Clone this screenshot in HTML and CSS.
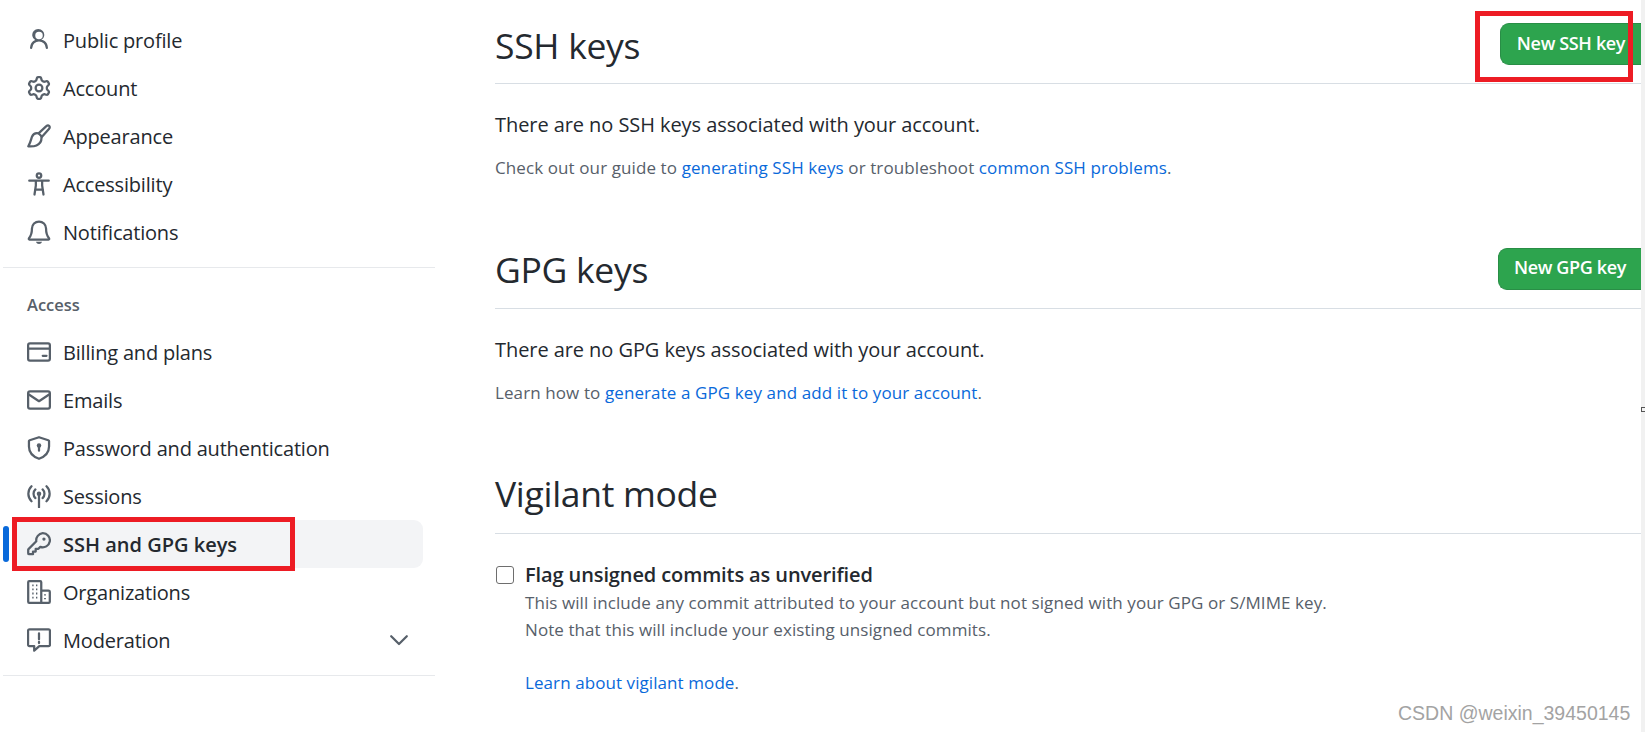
FILE: index.html
```html
<!DOCTYPE html>
<html lang="en">
<head>
<meta charset="utf-8">
<title>SSH and GPG keys</title>
<link rel="stylesheet" href="styles.css">
</head>
<body>
<div class="page">
  <aside class="sidebar">
    <nav class="group first">
      <a class="item"><svg class="ico" viewBox="0 0 16 16"><path class="f" d="M10.561 8.073a6.005 6.005 0 0 1 3.432 5.142.75.75 0 1 1-1.498.07 4.5 4.5 0 0 0-8.99 0 .75.75 0 1 1-1.498-.07 6.004 6.004 0 0 1 3.431-5.142 3.999 3.999 0 1 1 4.123 0ZM10.5 5a2.5 2.5 0 1 0-5 0 2.5 2.5 0 0 0 5 0Z"/></svg><span>Public profile</span></a>
      <a class="item"><svg class="ico" viewBox="0 0 16 16"><path class="f" d="M8 0a8.2 8.2 0 0 1 .701.031C9.444.095 9.99.645 10.16 1.29l.288 1.107c.018.066.079.158.212.224.231.114.454.243.668.386.123.082.233.09.299.071l1.103-.303c.644-.176 1.392.021 1.82.63.27.385.506.792.704 1.218.315.675.111 1.422-.364 1.891l-.814.806c-.049.048-.098.147-.088.294.016.257.016.515 0 .772-.01.147.038.246.088.294l.814.806c.475.469.679 1.216.364 1.891a7.977 7.977 0 0 1-.704 1.217c-.428.61-1.176.807-1.82.63l-1.102-.302c-.067-.019-.177-.011-.3.071a5.909 5.909 0 0 1-.668.386c-.133.066-.194.158-.211.224l-.29 1.106c-.168.646-.715 1.196-1.458 1.26a8.006 8.006 0 0 1-1.402 0c-.743-.064-1.289-.614-1.458-1.26l-.289-1.106c-.018-.066-.079-.158-.212-.224a5.738 5.738 0 0 1-.668-.386c-.123-.082-.233-.09-.299-.071l-1.103.303c-.644.176-1.392-.021-1.82-.63a8.12 8.12 0 0 1-.704-1.218c-.315-.675-.111-1.422.363-1.891l.815-.806c.05-.048.098-.147.088-.294a6.214 6.214 0 0 1 0-.772c.01-.147-.038-.246-.088-.294l-.815-.806C.635 6.045.431 5.298.746 4.623a7.92 7.92 0 0 1 .704-1.217c.428-.61 1.176-.807 1.82-.63l1.102.302c.067.019.177.011.3-.071.214-.143.437-.272.668-.386.133-.066.194-.158.211-.224l.29-1.106C6.009.645 6.556.095 7.299.03 7.53.01 7.764 0 8 0Zm-.571 1.525c-.036.003-.108.036-.137.146l-.289 1.105c-.147.561-.549.967-.998 1.189-.173.086-.34.183-.5.29-.417.278-.97.423-1.529.27l-1.103-.303c-.109-.03-.175.016-.195.045-.22.312-.412.644-.573.99-.014.031-.021.11.059.19l.815.806c.411.406.562.957.53 1.456a4.709 4.709 0 0 0 0 .582c.032.499-.119 1.05-.53 1.456l-.815.806c-.081.08-.073.159-.059.19.162.346.353.677.573.989.02.03.085.076.195.046l1.102-.303c.56-.153 1.113-.008 1.53.27.161.107.328.204.501.29.447.222.85.629.997 1.189l.289 1.105c.029.109.101.143.137.146a6.6 6.6 0 0 0 1.142 0c.036-.003.108-.036.137-.146l.289-1.105c.147-.561.549-.967.998-1.189.173-.086.34-.183.5-.29.417-.278.97-.423 1.529-.27l1.103.303c.109.029.175-.016.195-.045.22-.313.411-.644.573-.99.014-.031.021-.11-.059-.19l-.815-.806c-.411-.406-.562-.957-.53-1.456a4.709 4.709 0 0 0 0-.582c-.032-.499.119-1.05.53-1.456l.815-.806c.081-.08.073-.159.059-.19a6.464 6.464 0 0 0-.573-.989c-.02-.03-.085-.076-.195-.046l-1.102.303c-.56.153-1.113.008-1.53-.27a4.44 4.44 0 0 0-.501-.29c-.447-.222-.85-.629-.997-1.189l-.289-1.105c-.029-.11-.101-.143-.137-.146a6.6 6.6 0 0 0-1.142 0ZM11 8a3 3 0 1 1-6 0 3 3 0 0 1 6 0ZM9.5 8a1.5 1.5 0 1 0-3.001.001A1.5 1.5 0 0 0 9.5 8Z"/></svg><span>Account</span></a>
      <a class="item"><svg class="ico" viewBox="0 0 16 16"><path d="M14.700 1.200c.6.6.5 1.400-.1 2.100L10 8.500 7.700 6.200l5-4.600c.7-.6 1.400-.9 2-.4Z"/><path d="M7.700 6.200c-1.900-.4-3.600.5-4.300 2.100-.6 1.500-.9 3.600-2.500 6.600 2.400.1 4.100 0 5.400-.6 2.500-1.100 3.600-3.200 3.300-5.800"/></svg><span>Appearance</span></a>
      <a class="item"><svg class="ico" viewBox="0 0 16 16"><circle cx="8" cy="2.400" r="1.500"/><path d="M1.500 5.800h13M5.900 5.800v3.200L5 15M10.100 5.800v3.200l.9 6M5.400 11.800h5.200"/></svg><span>Accessibility</span></a>
      <a class="item"><svg class="ico" viewBox="0 0 16 16"><path d="M8 1A4.700 4.700 0 0 0 3.300 5.700c0 3-.8 5.100-2 6.500-.3.400-.1.800.3.800h12.800c.4 0 .6-.4.3-.8-1.200-1.400-2-3.500-2-6.500A4.700 4.700 0 0 0 8 1Z"/><path class="f" d="M6 14.500h4c-.3 1-1.100 1.500-2 1.500s-1.700-.5-2-1.500Z"/></svg><span>Notifications</span></a>
    </nav>
    <nav class="group">
      <h3 class="label">Access</h3>
      <a class="item"><svg class="ico" viewBox="0 0 16 16"><rect x=".75" y="2.250" width="14.500" height="11.500" rx="1.200"/><path d="M1 5.700h14M10.500 10.500h2.500"/></svg><span>Billing and plans</span></a>
      <a class="item"><svg class="ico" viewBox="0 0 16 16"><rect x=".75" y="2.250" width="14.500" height="11.500" rx="1.200"/><path d="M1 4.200 8 8.800l7-4.600"/></svg><span>Emails</span></a>
      <a class="item"><svg class="ico" viewBox="0 0 16 16"><path d="M8 .8 14.200 2.800c.3.100.5.300.5.600V7c0 3.700-2.300 6.600-6.700 8.200C3.600 13.600 1.300 10.700 1.300 7V3.400c0-.3.200-.5.500-.6Z"/><circle class="f" cx="8" cy="6.300" r="1.500"/><path d="M8 7v2.800"/></svg><span>Password and authentication</span></a>
      <a class="item"><svg class="ico" viewBox="0 0 16 16"><circle class="f" cx="8" cy="6.500" r="1.500"/><path d="M8 7.500V15.500M5.600 3.600a4 4 0 0 0 0 5.800M10.400 3.600a4 4 0 0 1 0 5.800M3 1.500a7 7 0 0 0 0 10M13 1.500a7 7 0 0 1 0 10"/></svg><span>Sessions</span></a>
      <a class="item active"><svg class="ico" viewBox="0 0 16 16"><path d="M10.500.8a4.700 4.700 0 1 1-1.600 9.100L7.600 11.200H5.800v1.800H4v1.800H1.500c-.4 0-.7-.3-.7-.7v-2.200c0-.2.100-.4.200-.5l5.200-5.200A4.700 4.700 0 0 1 10.500.8Z"/><circle class="f" cx="11.300" cy="4.700" r="1.100"/></svg><span>SSH and GPG keys</span></a>
      <a class="item"><svg class="ico" viewBox="0 0 16 16"><path d="M1.500 15.200c-.4 0-.7-.3-.7-.7V1.500c0-.4.300-.7.700-.7h7.300c.4 0 .7.300.7.700v13.700ZM9.500 7h4.800c.5 0 .9.400.9.900v6.600c0 .4-.3.700-.7.700H9.500"/><path class="d" d="M3.500 3.600h.9M6 3.600h.9M3.500 6.300h.9M6 6.300h.9M3.500 9h.9M6 9h.9M3.500 11.700h.9M6 11.700h.9M12 9.500v.9M12 12v.9"/></svg><span>Organizations</span></a>
      <a class="item"><svg class="ico" viewBox="0 0 16 16"><path d="M1.600.9h12.800c.5 0 .9.400.9.900v9.400c0 .5-.4.900-.9.900H8.200l-3.400 3V12H1.600c-.5 0-.9-.4-.9-.9V1.800c0-.5.400-.9.900-.9Z"/><path d="M8 3.500v4M8 9.200v.8"/></svg><span>Moderation</span><svg class="chev" viewBox="0 0 16 16"><path d="M2.800 5.500 8 10.700l5.200-5.200"/></svg></a>
    </nav>
  </aside>
  <main class="main">
    <section class="sec">
      <header class="head"><h2>SSH keys</h2><a class="btn b1">New SSH key</a></header>
      <p class="lead">There are no SSH keys associated with your account.</p>
      <p class="note">Check out our guide to <a>generating SSH keys</a> or troubleshoot <a>common SSH problems</a>.</p>
    </section>
    <section class="sec s2">
      <header class="head"><h2>GPG keys</h2><a class="btn b2">New GPG key</a></header>
      <p class="lead">There are no GPG keys associated with your account.</p>
      <p class="note">Learn how to <a>generate a GPG key and add it to your account</a>.</p>
    </section>
    <section class="sec s3">
      <header class="head"><h2>Vigilant mode</h2></header>
      <div class="check">
        <span class="box"></span>
        <div>
          <div class="ctitle">Flag unsigned commits as unverified</div>
          <div class="cnote">This will include any commit attributed to your account but not signed with your GPG or S/MIME key.<br>Note that this will include your existing unsigned commits.</div>
          <div class="cnote learn"><a>Learn about vigilant mode</a>.</div>
        </div>
      </div>
    </section>
  </main>
  <div class="scroll"></div>
</div>
<div class="mark1"></div>
<div class="mark2"></div>
<div class="tick"></div>
<div class="wm">CSDN @weixin_39450145</div>
</body>
</html>
```
FILE: styles.css
```css
* { box-sizing: border-box; }
html, body { margin: 0; height: 732px; overflow: hidden; background: #fff; }
body { font-family: "Open Sans", "Noto Sans", sans-serif; color: #24292f; position: relative; }
.page { display: flex; height: 732px; }
.sidebar { width: 495px; padding-left: 3px; flex: none; }
.group { width: 432px; border-bottom: 1px solid #e7e9ec; padding-bottom: 11px; }
.group.first { padding-top: 16px; padding-bottom: 11px; }
.label { margin: 0; padding: 17px 0 0 24px; height: 60px; font-size: 16.500px; font-weight: 600; color: #57606a; line-height: 40px; }
.item { display: flex; align-items: center; height: 48px; margin-left: 9px; width: 411px; padding-left: 15px; font-size: 20px; letter-spacing: -.19px; border-radius: 9px; position: relative; color: #24292f; }
.item span { margin-left: 12px; flex: 1; }
.ico { width: 24px; height: 24px; flex: none; fill: none; stroke: #57606a; stroke-width: 1.500; stroke-linecap: round; stroke-linejoin: round; }
.ico .f { fill: #57606a; stroke: none; }
.ico .d { stroke-width: 1.200; stroke-linecap: butt; }
.chev { width: 24px; height: 24px; margin-right: 12px; fill: none; stroke: #57606a; stroke-width: 1.500; stroke-linecap: round; stroke-linejoin: round; }
.active { background: #f3f4f6; font-weight: 600; letter-spacing: 0; }
.active::before { content: ""; position: absolute; left: -9px; top: 6px; width: 6px; height: 36px; border-radius: 6px; background: #0969da; }
.main { width: 1146px; flex: none; }
.head { display: flex; justify-content: space-between; align-items: center; height: 84px; padding-top: 6px; border-bottom: 1px solid #d8dee4; }
.head h2 { margin: 0; font-size: 35.500px; font-weight: 400; letter-spacing: -.3px; line-height: 48px; }
.btn { display: flex; align-items: center; justify-content: center; height: 42px; padding-bottom: 3px; color: #fff; background: #2da44e; border: 1px solid #298e46; border-right: 0; border-radius: 9px 0 0 9px; font-weight: 600; font-size: 18px; letter-spacing: -.35px; margin-top: -1px; }
.b1 { width: 141px; }
.b2 { width: 143px; }
.lead { margin: 26px 0 0; font-size: 20px; letter-spacing: -.07px; line-height: 30px; }
.note { margin: 14px 0 0; font-size: 17px; letter-spacing: .1px; line-height: 28px; color: #57606a; }
a { color: #0969da; }
.s2 { margin-top: 42px; }
.s2 .head { height: 85px; }
.s3 { margin-top: 40px; }
.s3 .head { height: 87px; }
.check { display: flex; margin-top: 26px; }
.box { width: 18px; height: 18px; margin: 6px 11px 0 1px; border: 1.500px solid #6e6e6e; border-radius: 3px; flex: none; }
.ctitle { font-size: 20px; font-weight: 600; letter-spacing: -.11px; line-height: 29px; }
.cnote { font-size: 17px; letter-spacing: .08px; line-height: 27px; color: #57606a; }
.learn { margin-top: 26px; }
.scroll { width: 4px; flex: none; background: #f1f1f1; }
.mark1 { position: absolute; left: 12px; top: 517px; width: 283px; height: 54px; border: 5px solid #ed1c24; }
.mark2 { position: absolute; left: 1475px; top: 11px; width: 158px; height: 71px; border: 5px solid #ed1c24; }
.tick { position: absolute; left: 1641px; top: 407px; width: 4px; height: 5px; border: 1px solid #555; border-right: 0; }
.wm { position: absolute; left: 1398px; top: 701px; font-family: "Liberation Sans", sans-serif; font-size: 19.500px; color: #a3a3a3; line-height: 24px; }
```
